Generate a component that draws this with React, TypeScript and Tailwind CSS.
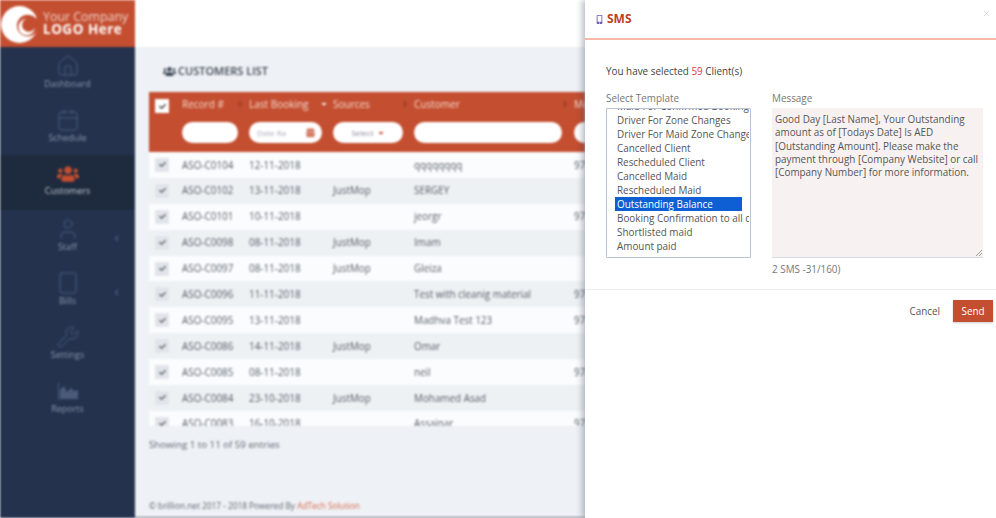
import React from "react";
import { FaUsers, FaCalendarAlt, FaCheck, FaCaretDown, FaSort, FaAngleLeft, FaMobileAlt } from "react-icons/fa";
import { Home, CalendarDays, User, Tablet, Wrench, X } from "lucide-react";

const rows = [
  ["ASO-C0104", "12-11-2018", "", "qqqqqqqq", "97"],
  ["ASO-C0102", "13-11-2018", "JustMop", "SERGEY", ""],
  ["ASO-C0101", "10-11-2018", "", "jeorgr", "97"],
  ["ASO-C0098", "08-11-2018", "JustMop", "Imam", ""],
  ["ASO-C0097", "08-11-2018", "JustMop", "Gleiza", ""],
  ["ASO-C0096", "11-11-2018", "", "Test with cleanig material", "97"],
  ["ASO-C0095", "13-11-2018", "", "Madhva Test 123", "97"],
  ["ASO-C0086", "14-11-2018", "JustMop", "Omar", ""],
  ["ASO-C0085", "08-11-2018", "", "neil", "97"],
  ["ASO-C0084", "23-10-2018", "JustMop", "Mohamed Asad", ""],
  ["ASO-C0083", "16-10-2018", "", "Assainar", "97"],
];

const templates = [
  "Maid For Confirmed Bookings",
  "Driver For Zone Changes",
  "Driver For Maid Zone Changes",
  "Cancelled Client",
  "Rescheduled Client",
  "Cancelled Maid",
  "Rescheduled Maid",
  "Outstanding Balance",
  "Booking Confirmation to all clients",
  "Shortlisted maid",
  "Amount paid",
];

function ReportsIcon() {
  return (
    <svg width="24" height="24" viewBox="0 0 24 24" fill="currentColor">
      <path d="M2 4h1v17H2z" />
      <path d="M4 20v-9l4-4 3 6 4-4 3 3 4-1v9z" />
    </svg>
  );
}

const nav = [
  { label: "Dashboard", icon: <Home size={24} strokeWidth={1} /> },
  { label: "Schedule", icon: <CalendarDays size={24} strokeWidth={1} /> },
  { label: "Customers", icon: <FaUsers size={22} />, active: true },
  { label: "Staff", icon: <User size={24} strokeWidth={1} />, chev: true },
  { label: "Bills", icon: <Tablet size={24} strokeWidth={1} />, chev: true },
  { label: "Settings", icon: <Wrench size={24} strokeWidth={1} /> },
  { label: "Reports", icon: <ReportsIcon /> },
];

function Sidebar() {
  return (
    <aside className="w-[135px] shrink-0 bg-[#24324e] flex flex-col">
      <div className="h-[47px] bg-[#c44e30] flex items-center pl-[1px] gap-[5px] shrink-0">
        <svg width="37" height="37" viewBox="0 0 36 36" className="shrink-0 mt-[2px]">
          <circle cx="18" cy="18" r="18" fill="#ffffff" />
          <circle cx="26" cy="19" r="10.5" fill="#c44e30" />
          <circle cx="25" cy="20.5" r="8" fill="#ffffff" />
          <circle cx="27" cy="18.5" r="6.5" fill="#c44e30" />
          <path d="M28 17L37 9v14z" fill="#c44e30" />
        </svg>
        <div className="text-white leading-[13px] mt-[-1px] whitespace-nowrap">
          <div className="text-[12.4px] opacity-75">Your Company</div>
          <div className="text-[13.5px] font-bold tracking-[0.5px]">LOGO Here</div>
        </div>
      </div>
      <nav className="flex flex-col">
        {nav.map((n) => (
          <div
            key={n.label}
            className={`relative h-[54.2px] pb-[4px] flex flex-col items-center justify-center ${n.active ? "bg-[#1e2a3e] text-[#c44e30]" : "text-[#4a5a78]"}`}
          >
            {n.icon}
            <span className={`text-[9px] leading-[12px] ${n.active ? "text-[#c3c9d4]" : "text-[#8c96a9]"}`}>{n.label}</span>
            {n.chev && <FaAngleLeft size={9} className="absolute right-[14px] top-[24px] text-[#4a5a78]" />}
          </div>
        ))}
      </nav>
    </aside>
  );
}

function Pill({ className, children }: { className: string; children?: React.ReactNode }) {
  return <div className={`h-[21px] rounded-full bg-white flex items-center shrink-0 ${className}`}>{children}</div>;
}

function Check({ white }: { white?: boolean }) {
  return (
    <div className={`w-[14px] h-[14px] flex items-center justify-center ${white ? "bg-white text-[#444]" : "bg-[#e1e5eb] text-[#666]"}`}>
      <FaCheck size={7} />
    </div>
  );
}

function Table() {
  const cols = "grid grid-cols-[33px_67px_84px_81px_160px_60px]";
  return (
    <div className="w-[436px] overflow-hidden">
      <div className={`${cols} h-[60px] bg-[#c44e30] text-[10px] text-[#f7dcd3]`}>
        <div className="pl-[6px] pt-[7px]"><Check white /></div>
        <div className="flex flex-col">
          <div className="h-[24px] flex items-center justify-between pr-[5px]">Record #<FaSort size={8} className="text-[#a23f26]" /></div>
          <Pill className="w-[56px] mt-[6px]" />
        </div>
        <div className="flex flex-col">
          <div className="h-[24px] flex items-center justify-between pr-[5px] whitespace-nowrap">Last Booking<FaCaretDown size={8} className="text-white" /></div>
          <Pill className="w-[73px] mt-[6px] pl-[8px] pr-[7px] justify-between text-[8px] text-[#aab]">
            <span>Date Ra</span>
            <FaCalendarAlt size={9} className="text-[#c44e30]" />
          </Pill>
        </div>
        <div className="flex flex-col">
          <div className="h-[24px] flex items-center justify-between pr-[5px]">Sources<FaSort size={8} className="text-[#a23f26]" /></div>
          <Pill className="w-[70px] mt-[6px] justify-center gap-[3px] text-[8px] text-[#889]">
            <span>Select</span>
            <FaCaretDown size={8} className="text-[#c44e30]" />
          </Pill>
        </div>
        <div className="flex flex-col">
          <div className="h-[24px] flex items-center justify-between pr-[5px]">Customer<FaSort size={8} className="text-[#a23f26]" /></div>
          <Pill className="w-[148px] mt-[6px]" />
        </div>
        <div className="flex flex-col whitespace-nowrap">
          <div className="h-[24px] flex items-center">Mobile</div>
          <Pill className="w-[60px] mt-[6px]" />
        </div>
      </div>
      <div className="h-[274px] overflow-hidden">
        {rows.map((r, i) => (
          <div
            key={r[0]}
            className={`${cols} h-[25.9px] items-center text-[9.9px] text-[#555d66] ${i % 2 === 0 ? "bg-[#fbfcfe]" : "bg-[#eef1f4]"}`}
          >
            <div className="pl-[6px]"><Check /></div>
            <div>{r[0]}</div>
            <div>{r[1]}</div>
            <div>{r[2]}</div>
            <div>{r[3]}</div>
            <div>{r[4]}</div>
          </div>
        ))}
      </div>
    </div>
  );
}

function Main() {
  return (
    <main className="flex-1 min-w-0 flex flex-col bg-[#eef1f5]">
      <div className="h-[47px] bg-white shrink-0" />
      <div className="flex-1 flex flex-col pl-[14px]">
        <div className="h-[45px] pl-[14px] pt-[4px] flex items-center gap-[2px] text-[11px] font-semibold text-[#3d4652]">
          <FaUsers size={13} />
          <span>CUSTOMERS LIST</span>
        </div>
        <Table />
        <div className="mt-[12px] text-[9.7px] leading-[14px] text-[#5e6670]">Showing 1 to 11 of 59 entries</div>
        <div className="mt-auto mb-[5px] text-[8.3px] leading-[12px] text-[#5e6670]">
          © brillion.net 2017 - 2018 Powered By <span className="text-[#d9694b]">AdTech Solution</span>
        </div>
      </div>
      <div className="h-px bg-[#5a6478] shrink-0" />
    </main>
  );
}

function Modal() {
  return (
    <div className="absolute top-0 right-0 bottom-0 w-[411px] bg-white shadow-[-3px_0_6px_rgba(60,70,90,0.35)] text-[9.9px] text-[#444] flex flex-col">
      <div className="relative h-[40px] shrink-0 border-b-2 border-[#f9b9a8] pl-[10px] flex items-center gap-[3px] text-[#bf3f27]">
        <FaMobileAlt size={9} className="text-[#6b5bb0]" />
        <span className="text-[12px] font-bold">SMS</span>
        <X size={9} className="absolute right-[5px] top-[9px] text-[#d5d5d5]" />
      </div>
      <div className="pl-[21px] pr-[13px] pt-[24px]">
        <div className="leading-[14px]">
          You have selected <span className="text-[#e0393e]">59</span> Client(s)
        </div>
        <div className="flex gap-[21px] mt-[13px]">
          <div className="w-[145px]">
            <div className="leading-[14px] mb-[3px] text-[#777]">Select Template</div>
            <div className="h-[150px] border border-[#b6c2d6] rounded-[1px] overflow-hidden text-[#555]">
              <div className="-mt-[10px] pl-[8px] pr-px">
                {templates.map((t) => (
                  <div
                    key={t}
                    className={`h-[14px] leading-[14px] whitespace-nowrap pl-[2px] overflow-hidden ${t === "Outstanding Balance" ? "bg-[#0d5fd3] text-white w-[127px]" : ""}`}
                  >
                    {t}
                  </div>
                ))}
              </div>
            </div>
          </div>
          <div className="w-[211px]">
            <div className="leading-[14px] mb-[3px] text-[#777]">Message</div>
            <div className="relative h-[150px] bg-[#f7f2f1] border-b border-[#d5dce6] px-[3px] py-[5px] leading-[13.3px] text-[#555]">
              Good Day [Last Name], Your Outstanding amount as of [Todays Date] Is AED [Outstanding Amount]. Please make the payment through [Company Website] or call [Company Number] for more information.
              <svg width="6" height="6" viewBox="0 0 6 6" className="absolute right-px bottom-px text-[#777]" stroke="currentColor" strokeWidth="0.7">
                <path d="M0 6L6 0M3 6L6 3" />
              </svg>
            </div>
            <div className="mt-[4px] leading-[14px] text-[#777]">2 SMS -31/160)</div>
          </div>
        </div>
      </div>
      <div className="mt-[13px] border-t border-[#eeeeee] pt-[10px] pr-[3px] flex justify-end items-center gap-[13px]">
        <span className="text-[#555]">Cancel</span>
        <div className="w-[40px] h-[22px] bg-[#c44e30] text-white flex items-center justify-center shadow-[0_1px_2px_rgba(0,0,0,0.2)]">Send</div>
      </div>
    </div>
  );
}

export default function App() {
  return (
    <div className="relative w-[996px] h-[518px] overflow-hidden bg-white font-['Open_Sans',sans-serif]">
      <div className="flex h-full blur-[1.1px]">
        <Sidebar />
        <Main />
      </div>
      <Modal />
    </div>
  );
}
